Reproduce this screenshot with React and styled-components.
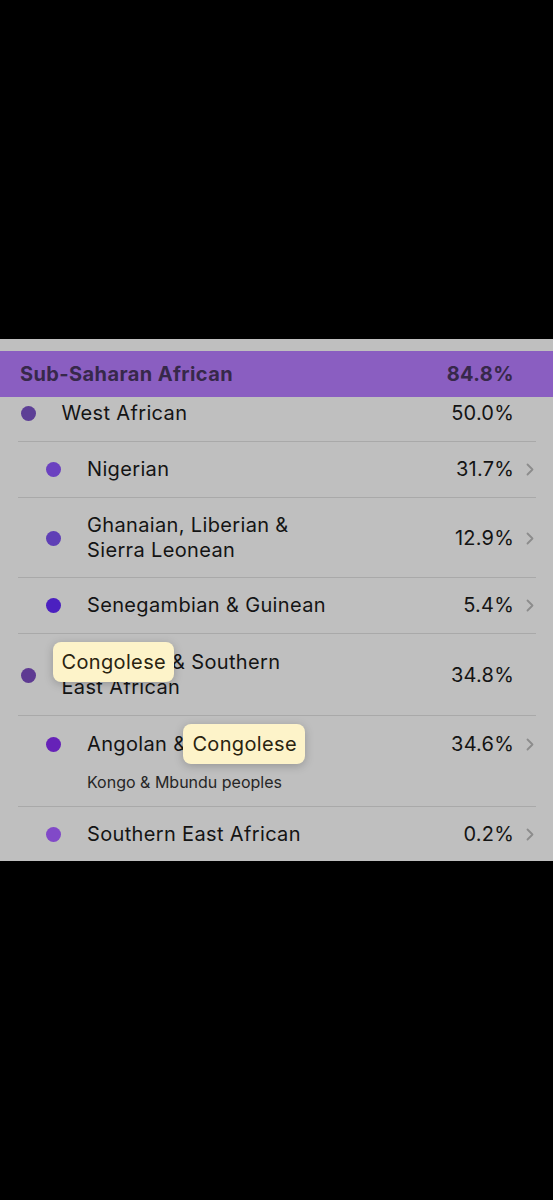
import React from "react";
import styled, { createGlobalStyle } from "styled-components";

const Global = createGlobalStyle`
  html, body { margin: 0; padding: 0; background: #000; }
  body { font-family: Inter, "Noto Sans", sans-serif; -webkit-font-smoothing: antialiased; }
`;

const Screen = styled.div`
  width: 553px;
  min-height: 1200px;
  background: #000;
  padding-top: 339px;
  box-sizing: border-box;
`;

const Panel = styled.section`
  background: #bfbfbf;
  padding-top: 12px;
`;

const Header = styled.div`
  height: 46px;
  background: #8a5ec1;
  display: flex;
  align-items: center;
  justify-content: space-between;
  padding: 0 39px 0 20px;
  font-size: 20px;
  font-weight: 700;
  color: #37284a;
  letter-spacing: 0.4px;
`;

const Row = styled.div`
  margin: 0 17px 0 18px;
  border-top: ${p => (p.$first ? "none" : "1px solid #a9a9a9")};
  padding: ${p => p.$pad};
  padding-left: ${p => (p.$level ? 28 : 2.5)}px;
  display: grid;
  grid-template-columns: 15px 1fr auto 22px;
  column-gap: 0;
  align-items: center;
`;

const DotCell = styled.div`
  align-self: ${p => (p.$top ? "start" : "center")};
  padding-top: ${p => (p.$top ? "5px" : "0")};
  display: flex;
`;

const Dot = styled.span`
  width: 15px;
  height: 15px;
  border-radius: 50%;
  background: ${p => p.$color};
`;

const TextCell = styled.div`
  display: flex;
  flex-direction: column;
  padding-left: 26px;
`;

const Label = styled.div`
  font-size: 20px;
  line-height: 25px;
  letter-spacing: 0.35px;
  color: #141414;
`;

const Sub = styled.div`
  margin-top: 15px;
  font-size: 16px;
  line-height: 20px;
  color: #262626;
`;

const ValueCell = styled.div`
  align-self: ${p => (p.$top ? "start" : "center")};
  font-size: 20px;
  line-height: 25px;
  letter-spacing: 0.2px;
  color: #141414;
  text-align: right;
`;

const ChevronSlot = styled.div`
  align-self: ${p => (p.$top ? "start" : "center")};
  height: 25px;
  display: flex;
  align-items: center;
  padding-left: 12px;
`;

const Highlight = styled.span`
  position: relative;
  z-index: 0;
  color: #2a2410;
  &::before {
    content: "";
    position: absolute;
    z-index: -1;
    top: -8px;
    bottom: -8px;
    left: -9px;
    right: -8px;
    background: #fdf3c9;
    border-radius: 8px;
    box-shadow: 0 2px 10px rgba(0, 0, 0, 0.22);
  }
`;

const Chevron = () => (
  <svg width="8" height="13" viewBox="0 0 8 13" fill="none">
    <path d="M1.5 1.5 L6.5 6.5 L1.5 11.5" stroke="#8c8c8c" strokeWidth="1.8" strokeLinecap="round" strokeLinejoin="round" />
  </svg>
);

const rows = [
  { level: 0, color: "#5d3f96", label: "West African", value: "50.0%", chev: false, first: true, pad: "4px 0 15px" },
  { level: 1, color: "#6b41c0", label: "Nigerian", value: "31.7%", chev: true, pad: "15px 0 15px" },
  { level: 1, color: "#5f3fb6", label: <>Ghanaian, Liberian &amp;<br />Sierra Leonean</>, value: "12.9%", chev: true, pad: "15px 0 14px" },
  { level: 1, color: "#4b20c0", label: "Senegambian & Guinean", value: "5.4%", chev: true, pad: "15px 0 15px" },
  { level: 0, color: "#5e3a92", label: <><Highlight>Congolese</Highlight> &amp; Southern<br />East African</>, value: "34.8%", chev: false, pad: "16px 0 15px" },
  { level: 1, color: "#6622b8", label: <>Angolan &amp; <Highlight>Congolese</Highlight></>, sub: "Kongo & Mbundu peoples", value: "34.6%", chev: true, pad: "16px 0 14px" },
  { level: 1, color: "#8149c8", label: "Southern East African", value: "0.2%", chev: true, pad: "15px 0 14px" },
];

export default function App() {
  return (
    <>
      <Global />
      <Screen>
        <Panel>
          <Header>
            <span>Sub-Saharan African</span>
            <span>84.8%</span>
          </Header>
          {rows.map((r, i) => (
            <Row key={i} $level={r.level} $first={r.first} $pad={r.pad}>
              <DotCell $top={!!r.sub}>
                <Dot $color={r.color} />
              </DotCell>
              <TextCell>
                <Label>{r.label}</Label>
                {r.sub && <Sub>{r.sub}</Sub>}
              </TextCell>
              <ValueCell $top={!!r.sub}>{r.value}</ValueCell>
              <ChevronSlot $top={!!r.sub}>{r.chev && <Chevron />}</ChevronSlot>
            </Row>
          ))}
        </Panel>
      </Screen>
    </>
  );
}
